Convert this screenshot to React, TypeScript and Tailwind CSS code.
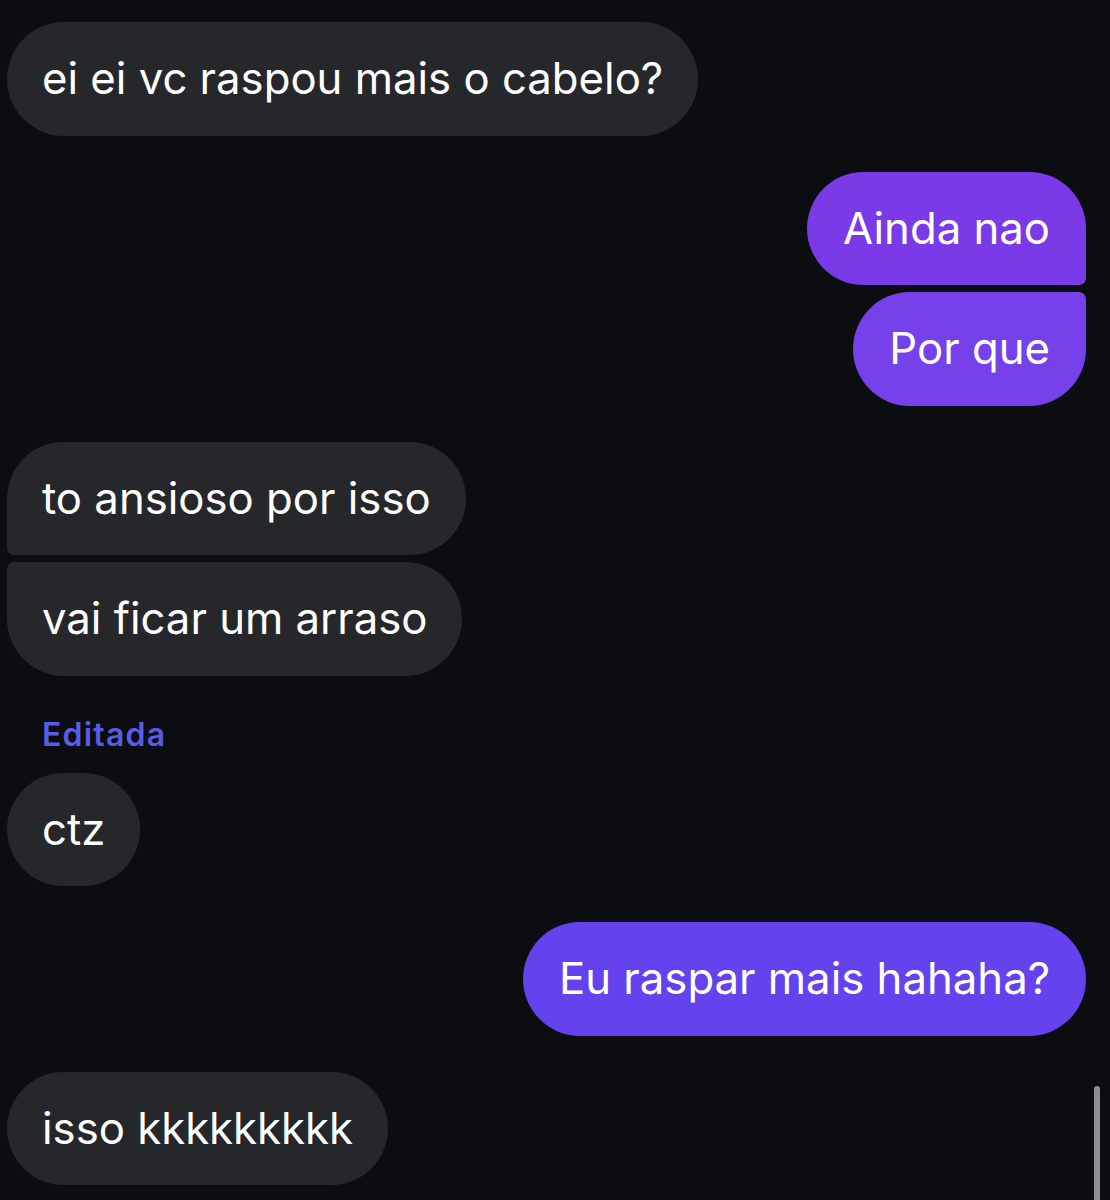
import React from "react";

const font = { fontFamily: "Inter, 'Noto Sans', sans-serif" };

function In({ text, cls = "" }: { text: string; cls?: string }) {
  return (
    <div className="flex justify-start">
      <div
        className={`bg-[#25272b] text-white text-[43.7px] leading-[53.5px] px-[35px] py-[30px] rounded-[57px] ${cls}`}
      >
        {text}
      </div>
    </div>
  );
}

function Out({ text, cls = "", color }: { text: string; cls?: string; color: string }) {
  return (
    <div className="flex justify-end">
      <div
        className={`${color} text-white text-[43.7px] leading-[53.5px] px-[36px] py-[30px] rounded-[57px] ${cls}`}
      >
        {text}
      </div>
    </div>
  );
}

export default function App() {
  return (
    <div
      className="relative w-[1110px] h-[1200px] overflow-hidden bg-[#0b0d11] pl-[7px] pr-[24px] pt-[22px]"
      style={font}
    >
      <div className="flex flex-col">
        <In text="ei ei vc raspou mais o cabelo?" />
        <div className="mt-[36px] flex flex-col gap-[7px]">
          <Out text="Ainda nao" color="bg-[#7b3ae8]" cls="rounded-br-[7px]" />
          <Out text="Por que" color="bg-[#7640ea]" cls="rounded-tr-[7px]" />
        </div>
        <div className="mt-[36px] flex flex-col gap-[7px]">
          <In text="to ansioso por isso" cls="rounded-bl-[7px]" />
          <In text="vai ficar um arraso" cls="rounded-tl-[7px]" />
        </div>
        <div className="mt-[41px] mb-[20px] ml-[35px] text-[32px] leading-[36px] tracking-[1.2px] font-semibold text-[#585ce6]">
          Editada
        </div>
        <In text="ctz" />
        <div className="mt-[36px]">
          <Out text="Eu raspar mais hahaha?" color="bg-[#6443ee]" />
        </div>
        <div className="mt-[36px]">
          <In text="isso kkkkkkkkk" />
        </div>
      </div>
      <div className="absolute left-[1094px] top-[1086px] w-[6px] h-[140px] rounded-full bg-[#8d8d92]" />
    </div>
  );
}
